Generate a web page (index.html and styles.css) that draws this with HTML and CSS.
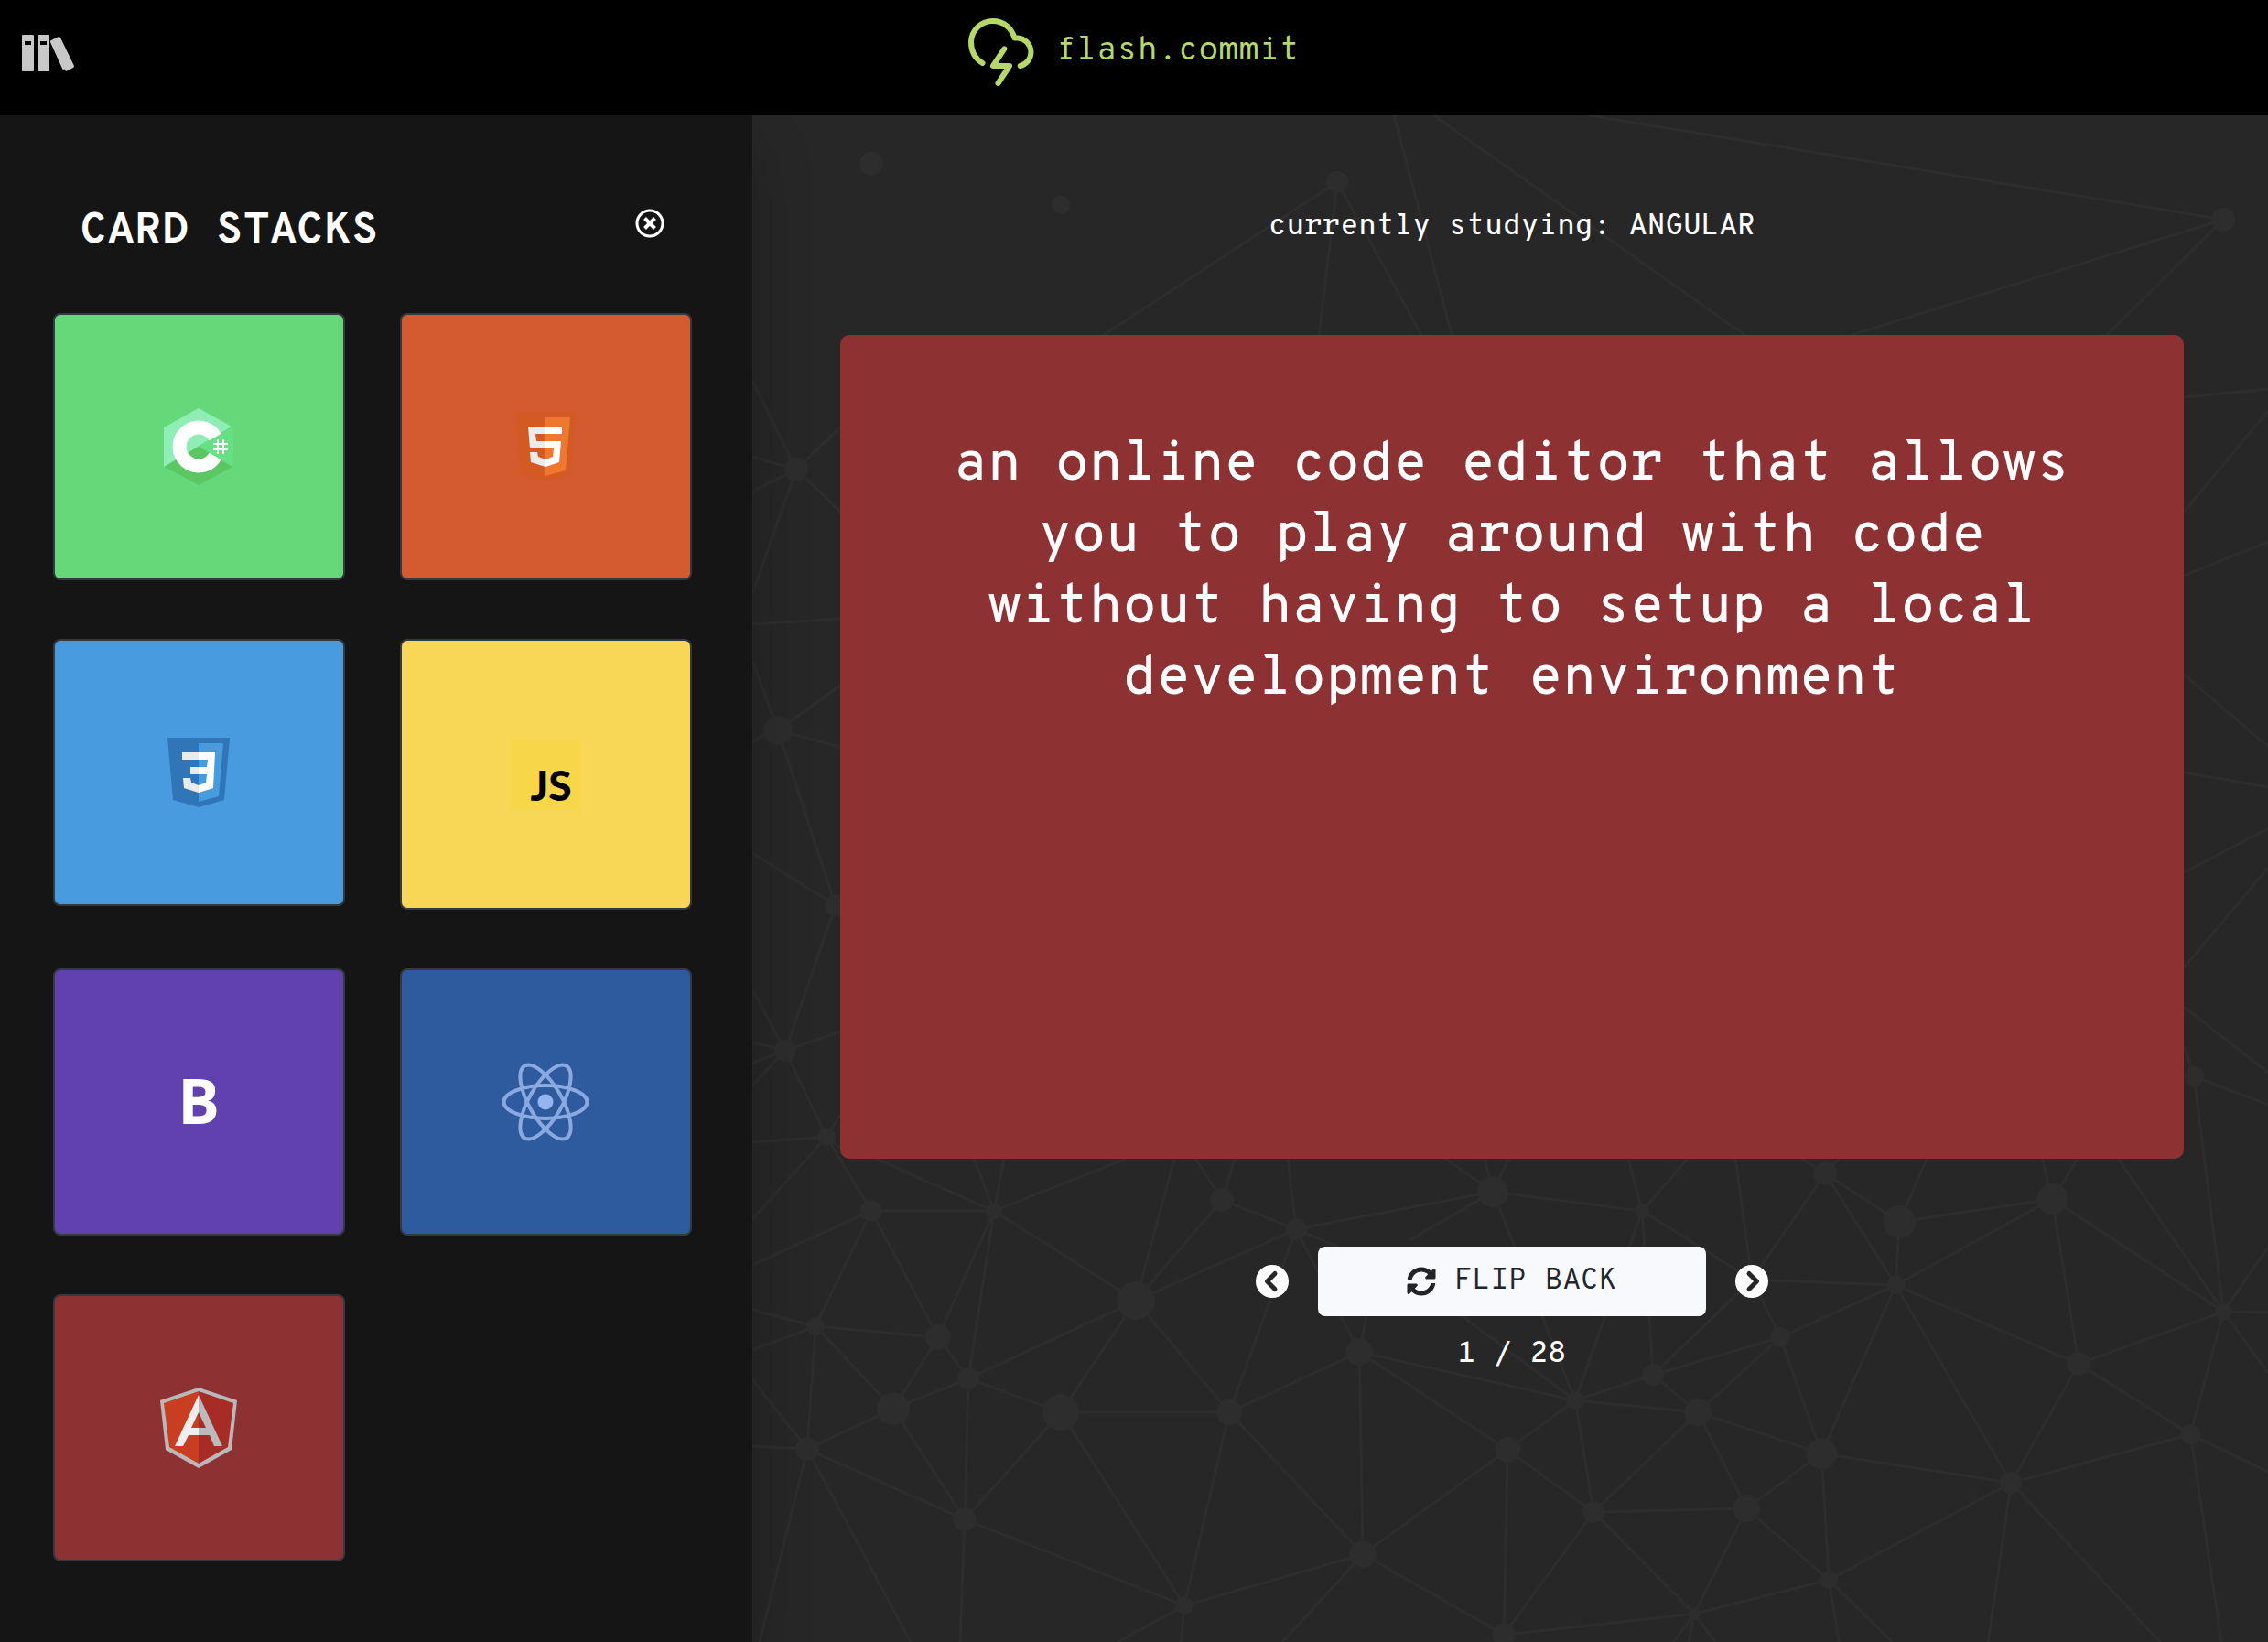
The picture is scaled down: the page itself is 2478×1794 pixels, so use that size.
FILE: index.html
```html
<!DOCTYPE html>
<html lang="en">
<head>
<meta charset="utf-8">
<meta name="viewport" content="width=device-width, initial-scale=1">
<title>flash.commit</title>
<link rel="stylesheet" href="styles.css">
</head>
<body>
<header class="topbar">
  <button class="icon-button" type="button" aria-label="Show card stacks">
    <svg width="58" height="40" viewBox="0 0 58 40" fill="#c8c8c8">
      <path fill-rule="evenodd" d="M1 0H12Q13 0 13 1V39Q13 40 12 40H1Q0 40 0 39V1Q0 0 1 0ZM3 7V11H10V7ZM18 0H29Q30 0 30 1V39Q30 40 29 40H18Q17 40 17 39V1Q17 0 18 0ZM20 7V11H27V7Z"/>
      <path d="M31 8Q30 7 32 6L40 2Q41 2 42 3L57 34Q57 35 56 36L48 40L46 37L45 39Z"/>
    </svg>
  </button>
  <a class="brand" href="#">
    <svg width="72" height="74" viewBox="36 20 72 74" fill="none" stroke="#b5d867" stroke-width="6" stroke-linecap="round" stroke-linejoin="round">
      <path d="M51.500 69C43.500 64 39 56 39 46A23.500 23.500 0 0 1 62.500 23C75 23 83.500 31 86.500 41.500H90A15.500 15.500 0 0 1 92.700 72"/>
      <path d="M75.300 53.300L63 72H81L68.500 91"/>
    </svg>
    <span>flash.commit</span>
  </a>
</header>

<div class="layout">
  <aside class="stacks">
    <div class="stacks-head">
      <h2>CARD STACKS</h2>
      <button class="icon-button close" type="button" aria-label="Close card stacks">
        <svg width="32" height="32" viewBox="0 0 32 32" fill="none" stroke="#fff" stroke-width="3"><circle cx="16" cy="16" r="14"/><path stroke-width="4" d="M10.500 10.500L21.500 21.500M21.500 10.500L10.500 21.500"/></svg>
      </button>
    </div>
    <div class="tiles">
      <button class="tile csharp" type="button" aria-label="C sharp">
        <svg viewBox="0 0 96 96">
          <path fill="#8eeeb5" d="M48 6L84 26L10 70V27Z"/>
          <path fill="#65e085" d="M48 48L84 26Q86 27 86 30V66Q86 69 84 70Z"/>
          <path fill="#5bc662" d="M48 48L85 70L48 90L11 70Z"/>
          <path fill="none" stroke="#fff" stroke-width="15" d="M66.200 37.500A21 21 0 1 0 66.200 58.500"/>
          <path stroke="#fff" stroke-width="2" d="M69 40V56M75 40V56M64 45H80M64 51H80"/>
        </svg>
      </button>
      <button class="tile html5" type="button" aria-label="HTML5">
        <svg viewBox="0 0 96 96">
          <path fill="#d45a24" d="M15 10H81L75 78L48 86L21 78Z"/>
          <path fill="#ef7730" d="M48 16H75L70 74L48 80Z"/>
          <path fill="#ebebeb" d="M48 26H29L31 50H48V42H38L37 34H48ZM48 62L40 59L39 54H31L32 65L48 70Z"/>
          <path fill="#fff" d="M48 26H66V34H48ZM48 42H65L63 65L48 70V62L56 59L57 50H48Z"/>
        </svg>
      </button>
      <button class="tile css3" type="button" aria-label="CSS3">
        <svg viewBox="0 0 96 96">
          <path fill="#3175b9" d="M14 10H82L76 78L48 86L20 78Z"/>
          <path fill="#479bdf" d="M48 16H75L70 74L48 80Z"/>
          <path fill="#ebebeb" d="M48 26H30V34H48ZM48 42H39V50H48ZM48 62L40 59L39 54H31L32 65L48 70Z"/>
          <path fill="#fff" d="M48 26H66L64 65L48 70V62L56 59L57 50H48V42H57L58 34H48Z"/>
        </svg>
      </button>
      <button class="tile js" type="button" aria-label="JavaScript">
        <svg viewBox="0 0 96 96">
          <path fill="#f7d747" d="M10 10H86V86H10Z"/>
          <text class="js-mark" x="54" y="77" text-anchor="middle">JS</text>
        </svg>
      </button>
      <button class="tile bootstrap" type="button" aria-label="Bootstrap">
        <svg viewBox="0 0 96 96"><text class="bootstrap-mark" x="48" y="72" text-anchor="middle">B</text></svg>
      </button>
      <button class="tile react" type="button" aria-label="React">
        <svg viewBox="0 0 96 96" fill="none" stroke="#89a9df" stroke-width="4">
          <circle cx="48" cy="48" r="8.500" fill="#94b5ee" stroke="none"/>
          <ellipse cx="48" cy="48" rx="45.500" ry="18"/>
          <ellipse cx="48" cy="48" rx="45.500" ry="18" transform="rotate(60 48 48)"/>
          <ellipse cx="48" cy="48" rx="45.500" ry="18" transform="rotate(120 48 48)"/>
        </svg>
      </button>
      <button class="tile angular" type="button" aria-label="Angular">
        <svg viewBox="0 0 96 96">
          <path fill="#b9b9b9" d="M48 4L90 18L84 72L48 92L12 72L6 18Z"/>
          <path fill="#c93d20" d="M48 8L10 21L16 69L48 87Z"/>
          <path fill="#a72c26" d="M48 8L86 21L80 69L48 87Z"/>
          <path fill="#eee" d="M48 12L22 68H31L37 56H48V48H40L48 31Z"/>
          <path fill="#bbb" d="M48 12L74 68H65L60 56H48V48H56L48 31Z"/>
        </svg>
      </button>
    </div>
  </aside>

  <main class="study">
    <svg class="network" viewBox="822 126 1656 1668" preserveAspectRatio="xMidYMid slice" aria-hidden="true">
      <g fill="none" stroke="#2d2d2d" stroke-width="3">
        <path d="M1206 366L1461 199L1441 366M1461 199L1553 366M1523 126L1586 366M1566 126L1906 366M1735 126L2429 240L2023 366M2429 240L2302 366"/>
        <path d="M822 416L870 513L822 499M822 537L870 513L822 649M918 467L870 513L918 559M822 682L918 676M822 722L850 798L822 809M918 749L850 798L918 816M850 798L913 989L822 932M913 989L858 1148L822 1081M822 1139L858 1148L822 1161M822 1186L858 1148L918 1127M858 1148L903 1242L822 1248M918 1218L903 1242L822 1332M918 1254L903 1242L952 1323"/>
        <path d="M2386 434L2478 425M2386 559L2478 449M2386 629L2478 592M2386 737L2478 816M2386 844L2478 860M2386 953L2478 905M2386 1057L2478 948M2386 1100L2478 1172M2386 1143L2397 1176L2478 1207M2397 1176L2429 1433"/>
        <path d="M957 1266L1086 1323L1064 1266M1097 1266L1086 1323L1230 1266M952 1323H1086L1241 1421M1025 1461L1086 1323L1058 1506M822 1382L952 1323L891 1449M952 1323L1025 1461M1306 1266L1335 1311L1349 1266M1241 1421L1335 1311L1416 1343M1283 1266L1241 1421L1416 1343M1058 1506L1241 1421L1159 1543M1241 1421L1343 1543L1416 1343L1407 1266M1631 1302L1416 1343L1485 1477L1493 1438M1416 1343L1540 1395L1721 1530M1540 1355L1631 1302L1579 1266M1622 1266L1631 1302L1648 1266M1343 1543L1485 1477L1721 1530L1631 1302L1794 1323M1485 1477L1489 1698M1485 1477L1647 1584"/>
        <path d="M822 1431L891 1449L822 1475M1025 1461L891 1449L976 1539L1025 1461L1058 1506L976 1539L882 1583L891 1449M1159 1543L1058 1506L1054 1660L976 1539M822 1507L882 1583L822 1580M830 1794L882 1583L995 1794M882 1583L1054 1660L1159 1543H1343L1294 1754L1159 1543M1343 1543L1489 1698L1294 1754L1054 1660L1049 1794M1221 1794L1294 1754L1290 1794M1401 1794L1489 1698L1647 1584L1643 1786L1489 1698"/>
        <path d="M1779 1266L1794 1323L1844 1266M1914 1398L1794 1323L1721 1530M1794 1323L1806 1502M1896 1266L1914 1398L1994 1282L2071 1404L1914 1398L1945 1461M1914 1398L1806 1502M1968 1266L1994 1282L2009 1266M1994 1282L2075 1335L2105 1266M2071 1404L2075 1335L2242 1310L2231 1266M2270 1266L2242 1310L2071 1404M2271 1490L2242 1310L2429 1433L2314 1266M2478 1362L2429 1433L2478 1434M2478 1500L2429 1433L2271 1490M2429 1433L2393 1567"/>
        <path d="M1945 1461L2071 1404L2271 1490M1990 1588L2071 1404L2197 1620M1806 1502L1945 1461L1855 1543M1945 1461L1990 1588M1721 1530L1806 1502L1855 1543L1721 1530L1647 1584L1741 1652L1721 1530M1741 1652L1855 1543L1908 1648M1855 1543L1990 1588L1908 1648M2197 1620L1990 1588L1998 1726M2197 1620L2271 1490L2393 1567L2197 1620M2478 1608L2393 1567L2427 1794M1998 1726L2197 1620L2172 1794M2197 1620L2360 1794M1643 1786L1741 1652L1908 1648L1851 1763L1741 1652M1908 1648L1998 1726L1851 1763L1643 1786M2009 1794L1998 1726L2067 1794M1828 1794L1851 1763L1845 1794M1851 1763L1874 1794"/>
      </g>
      <g fill="#2d2d2d">
        <circle cx="952" cy="179" r="13"/><circle cx="1159" cy="224" r="10"/><circle cx="1461" cy="199" r="12"/><circle cx="2429" cy="240" r="13"/>
        <circle cx="870" cy="513" r="13"/><circle cx="850" cy="798" r="16"/><circle cx="913" cy="989" r="12"/><circle cx="858" cy="1148" r="12"/><circle cx="903" cy="1242" r="10"/><circle cx="2397" cy="1176" r="11"/>
        <circle cx="952" cy="1323" r="12"/><circle cx="1086" cy="1323" r="9"/><circle cx="1335" cy="1311" r="13"/><circle cx="1416" cy="1343" r="12"/><circle cx="1631" cy="1302" r="17"/><circle cx="1241" cy="1421" r="21"/>
        <circle cx="891" cy="1449" r="10"/><circle cx="1025" cy="1461" r="14"/><circle cx="1058" cy="1506" r="12"/><circle cx="976" cy="1539" r="18"/><circle cx="1159" cy="1543" r="20"/><circle cx="1343" cy="1543" r="14"/><circle cx="1485" cy="1477" r="15"/>
        <circle cx="882" cy="1583" r="13"/><circle cx="1054" cy="1660" r="13"/><circle cx="1294" cy="1754" r="10"/><circle cx="1489" cy="1698" r="15"/><circle cx="1647" cy="1584" r="14"/><circle cx="1643" cy="1786" r="13"/>
        <circle cx="1994" cy="1282" r="13"/><circle cx="2075" cy="1335" r="18"/><circle cx="2242" cy="1310" r="17"/><circle cx="1794" cy="1323" r="8"/><circle cx="2071" cy="1404" r="10"/><circle cx="1945" cy="1461" r="11"/><circle cx="2429" cy="1433" r="9"/>
        <circle cx="1806" cy="1502" r="12"/><circle cx="2271" cy="1490" r="13"/><circle cx="1721" cy="1530" r="10"/><circle cx="1855" cy="1543" r="15"/><circle cx="1990" cy="1588" r="17"/><circle cx="2393" cy="1567" r="11"/>
        <circle cx="2197" cy="1620" r="12"/><circle cx="1741" cy="1652" r="12"/><circle cx="1908" cy="1648" r="15"/><circle cx="1998" cy="1726" r="10"/><circle cx="1851" cy="1763" r="7"/>
      </g>
    </svg>
    <p class="status">currently studying: ANGULAR</p>
    <article class="flashcard">
      <p>an online code editor that allows you to play around with code without having to setup a local development environment</p>
    </article>
    <div class="controls">
      <button class="icon-button" type="button" aria-label="Previous card">
        <svg width="36" height="36" viewBox="0 0 36 36"><circle cx="18" cy="18" r="18" fill="#fff"/><path fill="none" stroke="#272727" stroke-width="5" stroke-linecap="round" stroke-linejoin="round" d="M21 9.500L12.500 18L21 26.500"/></svg>
      </button>
      <button class="flip" type="button">
        <svg width="32" height="32" viewBox="0 0 512 512" fill="currentColor"><path d="M370.72 133.28C339.458 104.008 298.888 87.962 255.848 88c-77.458.068-144.328 53.178-162.791 126.85-1.344 5.363-6.122 9.15-11.651 9.15H24.103c-7.498 0-13.194-6.807-11.807-14.176C33.933 94.924 134.813 8 256 8c66.448 0 126.791 26.136 171.315 68.685L463.03 40.97C478.149 25.851 504 36.559 504 57.941V192c0 13.255-10.745 24-24 24H345.941c-21.382 0-32.09-25.851-16.971-40.971l41.75-41.749zM32 296h134.059c21.382 0 32.09 25.851 16.971 40.971l-41.75 41.75c31.262 29.273 71.835 45.319 114.876 45.28 77.418-.07 144.315-53.144 162.787-126.849 1.344-5.363 6.122-9.15 11.651-9.15h57.304c7.498 0 13.194 6.807 11.807 14.176C478.067 417.076 377.187 504 256 504c-66.448 0-126.791-26.136-171.315-68.685L48.97 471.03C33.851 486.149 8 475.441 8 454.059V320c0-13.255 10.745-24 24-24z"/></svg>
        <span>FLIP BACK</span>
      </button>
      <button class="icon-button" type="button" aria-label="Next card">
        <svg width="36" height="36" viewBox="0 0 36 36"><circle cx="18" cy="18" r="18" fill="#fff"/><path fill="none" stroke="#272727" stroke-width="5" stroke-linecap="round" stroke-linejoin="round" d="M15 9.500L23.500 18L15 26.500"/></svg>
      </button>
    </div>
    <p class="count">1 / 28</p>
  </main>
</div>
</body>
</html>
```
FILE: styles.css
```css
* {
  box-sizing: border-box;
}

body {
  margin: 0;
  min-height: 100vh;
  display: flex;
  flex-direction: column;
  background: #272727;
  color: #fff;
  font-family: "Overpass Mono", "DejaVu Sans Mono", monospace;
  font-size: 32px;
  font-variant-ligatures: none;
}

h2,
p {
  margin: 0;
}

button {
  font: inherit;
  cursor: pointer;
}

svg {
  display: block;
}

.icon-button {
  padding: 0;
  border: 0;
  background: none;
}

.topbar {
  position: relative;
  z-index: 2;
  display: grid;
  grid-template-columns: 1fr auto 1fr;
  align-items: start;
  padding: 20px 24px 32px;
  background: #000;
}

.topbar .icon-button {
  justify-self: start;
  margin-top: 18px;
}

.brand {
  display: flex;
  align-items: flex-start;
  gap: 24px;
  color: #b5d867;
  font-size: 36px;
  line-height: 72px;
  text-decoration: none;
}

.layout {
  flex: 1;
  display: grid;
  grid-template-columns: 33.16% 1fr;
}

.stacks {
  position: relative;
  z-index: 1;
  padding: 90px 66px 64px 58px;
  background: #151515;
  box-shadow: 0 32px 64px rgba(0, 0, 0, 0.2);
}

.stacks-head {
  display: flex;
  justify-content: space-between;
  align-items: flex-start;
  margin-bottom: 52px;
  padding: 0 30px 0 30px;
}

.stacks-head h2 {
  font-size: 48px;
  font-weight: 700;
  line-height: 74px;
}

.close {
  height: 56px;
}

.tiles {
  display: grid;
  grid-template-columns: 1fr 1fr;
  align-items: start;
  gap: 64px 60px;
}

.tile {
  display: flex;
  align-items: center;
  justify-content: center;
  height: 292px;
  padding: 0;
  border: 2px solid #343a40;
  border-radius: 8px;
}

.tile svg {
  width: 96px;
  height: 96px;
}

.csharp { background: #65d87a; }
.html5 { background: #d45a2f; }
.css3 { background: #489bdf; }
.js { height: 296px; background: #f8d756; }
.bootstrap { background: #6141ae; }
.react { background: #2d5b9e; }
.angular { background: #8e3133; }

.js-mark {
  fill: #000;
  font-family: Lato, sans-serif;
  font-size: 46px;
  font-weight: 900;
}

.bootstrap-mark {
  fill: #fff;
  font-family: "Open Sans", sans-serif;
  font-size: 68px;
  font-weight: 700;
}

.study {
  position: relative;
  z-index: 0;
  display: flex;
  flex-direction: column;
  padding: 90px 92px 64px 96px;
  text-align: center;
}

.network {
  position: absolute;
  inset: 0;
  z-index: -1;
  width: 100%;
  height: 100%;
}

.status {
  margin-bottom: 86px;
  font-weight: 500;
  line-height: 64px;
}

.flashcard {
  min-height: 900px;
  padding: 104px 100px;
  border-radius: 10px;
  background: #8e3133;
  font-size: 60px;
  font-weight: 500;
  line-height: 78px;
}

.controls {
  display: flex;
  justify-content: center;
  align-items: center;
  gap: 32px;
  margin-top: 96px;
}

.flip {
  display: flex;
  align-items: center;
  justify-content: center;
  gap: 20px;
  width: 424px;
  height: 76px;
  padding: 0;
  border: 0;
  border-radius: 8px;
  background: #f8f9fc;
  color: #212529;
}

.count {
  margin-top: 14px;
  font-weight: 500;
  line-height: 56px;
}
```
